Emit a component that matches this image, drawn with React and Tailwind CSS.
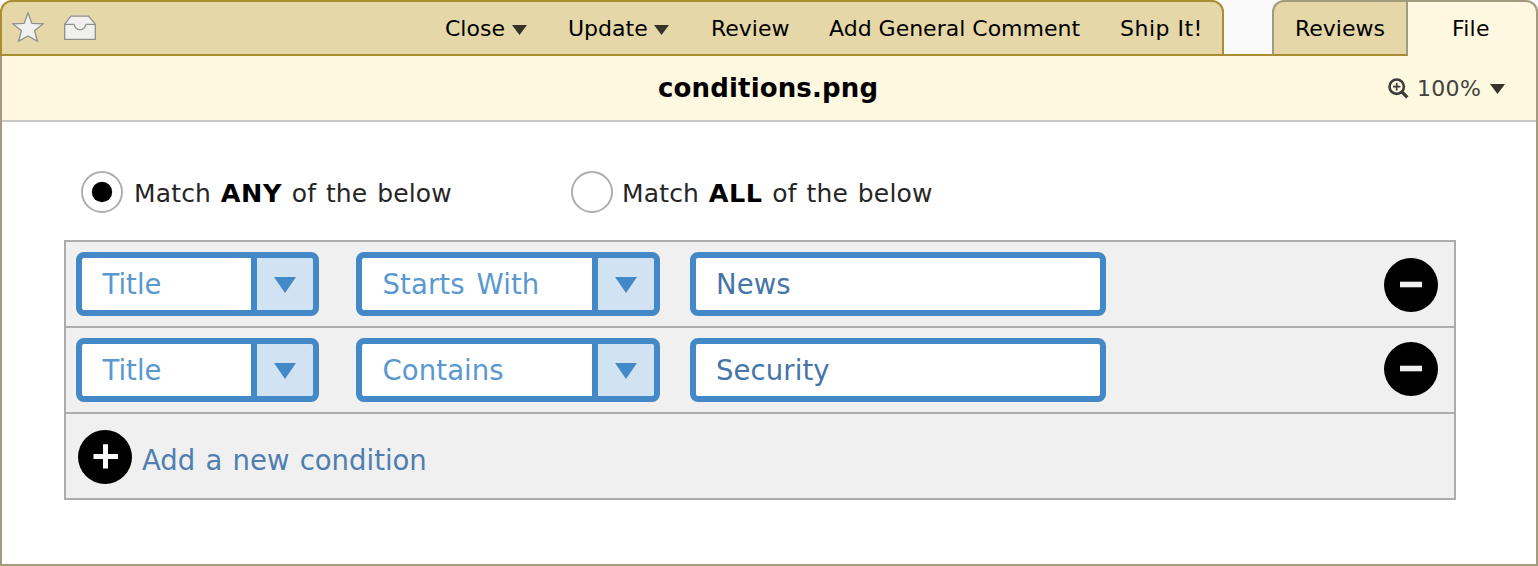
function Caret({ className }) {
  return (
    <svg className={className} width="15" height="10" viewBox="0 0 15 10">
      <path d="M0 0H15L7.5 10Z" fill="#34342a" />
    </svg>
  );
}

function StarIcon() {
  return (
    <svg width="34" height="34" viewBox="0 0 34 34" fill="#f0f0ee" stroke="#8c918e" strokeWidth="1.3">
      <path d="M17 3L20.900 13.400L32 13.900L23.600 20.700L26.400 31.300L17 26L7.600 31.300L10.400 20.700L2 13.900L13.100 13.400Z" />
    </svg>
  );
}

function InboxIcon() {
  return (
    <svg width="34" height="26" viewBox="0 0 34 26" fill="#f0f0ee" stroke="#8c918e" strokeWidth="1.3">
      <path d="M1.7 9.2L8 1.2H25.5L32.3 9.2V24.3H1.7Z" />
      <path d="M1.7 9.4H11C12 12.500 14 14.800 17 14.800C20 14.800 22 12.500 23 9.400H32.300" fill="none" />
    </svg>
  );
}

function ZoomIcon() {
  return (
    <svg width="21" height="21" viewBox="0 0 21 21" fill="none" stroke="#3d3d39" className="mt-px">
      <circle cx="8.700" cy="8.700" r="7.200" strokeWidth="2.600" />
      <path d="M14 14L19.300 19.300" strokeWidth="3.200" />
      <path d="M8.700 5V12.400M5 8.700H12.400" strokeWidth="1.700" />
    </svg>
  );
}

function Radio({ checked, children, className, labelClass }) {
  return (
    <label className={`flex h-[42px] items-start ${className}`}>
      <svg width="42" height="42" viewBox="0 0 42 42" className="shrink-0">
        <circle cx="21" cy="21" r="20" fill="#fff" stroke="#adadad" strokeWidth="1.900" />
        {checked && <circle cx="21" cy="21" r="10.200" fill="#000" />}
      </svg>
      <span className={`text-[25px] leading-[44px] whitespace-nowrap text-[#262626] ${labelClass}`}>{children}</span>
    </label>
  );
}

function Select({ children, className }) {
  return (
    <div className={`flex h-16 shrink-0 rounded-[8px] border-6 border-[#4389c8] bg-[#4389c8] ${className}`}>
      <div className="flex flex-1 items-center rounded-l-[2px] bg-white pt-0.5 pl-[20.5px] text-[27.5px] whitespace-nowrap text-[#5a98d0]">
        {children}
      </div>
      <div className="ml-1.5 flex w-14 items-center justify-center rounded-r-[2px] bg-[#d1e3f3]">
        <svg width="22" height="16" viewBox="0 0 22 16" className="mt-0.5 mr-px">
          <path d="M0 0H22L11 16Z" fill="#4389c8" />
        </svg>
      </div>
    </div>
  );
}

function CircleIcon({ plus, className }) {
  return (
    <svg width="54" height="54" viewBox="0 0 54 54" className={`shrink-0 ${className}`}>
      <circle cx="27" cy="27" r="27" fill="#000" />
      {plus ? (
        <path d="M15.500 26.500H40M27.500 14.300V38.500" stroke="#fff" strokeWidth="5" />
      ) : (
        <path d="M16 26.500H38" stroke="#f0f0f0" strokeWidth="5.600" />
      )}
    </svg>
  );
}

function Row({ field, op, value, iconClass }) {
  return (
    <div className="flex h-[86px] items-start border-b-2 border-[#acacac] pt-2.5 pl-2.5">
      <Select className="w-[243px]">{field}</Select>
      <Select className="ml-[37px] w-[304px] tracking-[0.1px] [word-spacing:3px]">{op}</Select>
      <div className="ml-[30px] flex h-16 w-[416px] items-center rounded-[8px] border-6 border-[#4389c8] bg-white pt-0.5 pl-5 text-[27.5px] tracking-[0.1px] text-[#4675a8]">
        {value}
      </div>
      <CircleIcon className={iconClass} />
    </div>
  );
}

export default function App() {
  return (
    <div className="flex h-[566px] w-[1538px] flex-col overflow-hidden bg-[#f9f9f9] font-['DejaVu_Sans',sans-serif]">
      <div className="flex h-14 shrink-0 text-[22px] leading-[54px] whitespace-nowrap text-black">
        <div className="flex w-[1224px] rounded-t-[12px] border-2 border-[#a88d31] bg-[#e5d7a7]">
          <div className="flex w-[443px] items-start pt-2 pl-[9px]">
            <StarIcon />
            <div className="mt-[5px] ml-[18px]">
              <InboxIcon />
            </div>
          </div>
          <div className="flex h-[54px] w-[123px] items-center">
            <span className="w-[67px]">Close</span>
            <Caret className="mt-px" />
          </div>
          <div className="flex h-[54px] w-[143px] items-center">
            <span className="w-[86px]">Update</span>
            <Caret className="mt-px" />
          </div>
          <span className="w-[118px]">Review</span>
          <span className="w-[291px]">Add General Comment</span>
          <span className="tracking-[0.5px]">Ship It!</span>
        </div>
        <div className="w-12 border-b-2 border-[#a88d31]" />
        <div className="w-[136px] rounded-tl-[12px] border-2 border-[#a39b7d] border-b-[#a88d31] bg-[#e5d7a7] pl-[21px]">
          Reviews
        </div>
        <div className="w-[130px] rounded-tr-[12px] border-t-2 border-r-2 border-[#a39b7d] bg-[#fff8e0] pl-11 tracking-[0.2px]">
          File
        </div>
      </div>
      <div className="flex flex-1 flex-col border-x-2 border-b-2 border-[#a39b7d] bg-white">
        <div className="flex h-[66px] shrink-0 items-center border-b-2 border-[#c8c8c8] bg-[#fff8e0] pl-[656px] whitespace-nowrap">
          <span className="w-[730px] pt-px text-[26px] font-bold tracking-[0.15px] text-black">conditions.png</span>
          <ZoomIcon />
          <span className="ml-2 w-[73px] text-[22px] tracking-[0.3px] text-[#41413d]">100%</span>
          <Caret className="mt-px" />
        </div>
        <div className="mt-[49px] ml-[79px] flex">
          <Radio checked className="w-[490px]" labelClass="ml-[11px] tracking-[0.15px] [word-spacing:1.7px]">
            Match <b className="text-[25.5px] tracking-[0.5px] text-black">ANY</b> of the below
          </Radio>
          <Radio labelClass="ml-[9px] tracking-[0.15px] [word-spacing:1.7px]">
            Match <b className="text-[25.5px] tracking-[0.5px] text-black">ALL</b> of the below
          </Radio>
        </div>
        <div className="mt-[27px] ml-[62px] h-[260px] w-[1392px] border-2 border-[#acacac] bg-[#f0f0f0]">
          <Row field="Title" op="Starts With" value="News" iconClass="ml-[278px] mt-[6px]" />
          <Row field="Title" op="Contains" value="Security" iconClass="ml-[278px] mt-[4px]" />
          <div className="flex items-start pt-4 pl-3 text-[27.5px] leading-[60px] whitespace-nowrap text-[#4f7eb0]">
            <CircleIcon plus />
            <span className="ml-2.5 [word-spacing:1.5px]">Add a new condition</span>
          </div>
        </div>
      </div>
    </div>
  );
}
